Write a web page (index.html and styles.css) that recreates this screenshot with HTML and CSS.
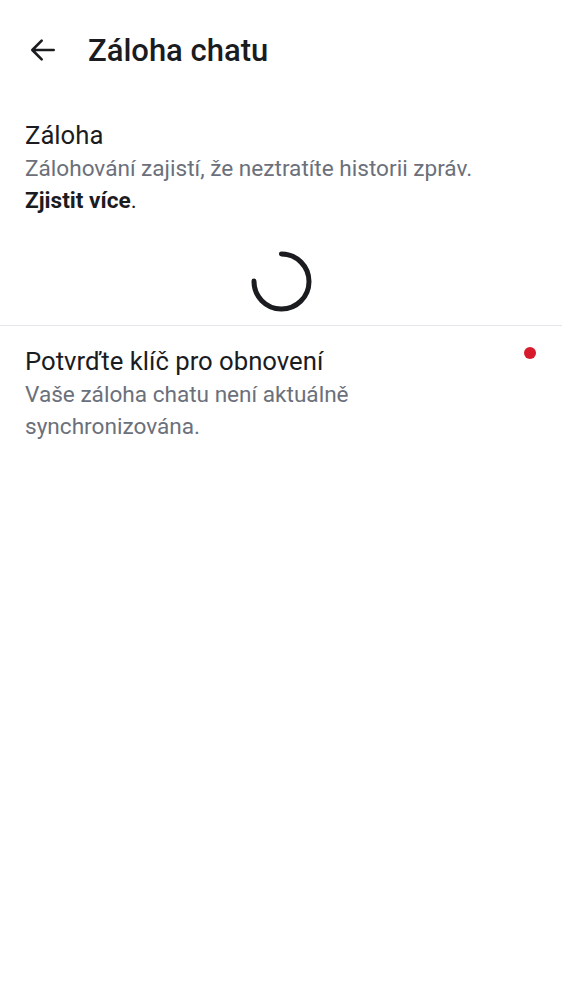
FILE: index.html
```html
<!DOCTYPE html>
<html lang="cs">
<head>
<meta charset="utf-8">
<link rel="stylesheet" href="styles.css">
</head>
<body>
<div class="screen">
  <header class="topbar">
    <button class="back" aria-label="Zpět">
      <svg width="32" height="32" viewBox="0 0 24 24"><path d="M20 12H4.5M11 5l-7 7 7 7" fill="none" stroke="#1b1c1f" stroke-width="2" stroke-linecap="round" stroke-linejoin="round"/></svg>
    </button>
    <h1 class="title">Záloha chatu</h1>
  </header>

  <section class="item">
    <div class="item-title">Záloha</div>
    <div class="item-sub">Zálohování zajistí, že neztratíte historii zpráv.<br><b class="link">Zjistit více</b><span class="dark">.</span></div>
  </section>

  <div class="spinner-wrap">
    <svg class="spinner" width="64" height="64" viewBox="0 0 64 64"><path d="M32 5 A27.5 27.5 0 1 1 4.5 32" transform="translate(0.5,0)" fill="none" stroke="#1b1c1f" stroke-width="5" stroke-linecap="round"/></svg>
  </div>

  <div class="divider"></div>

  <section class="item item2">
    <div class="item-text">
      <div class="item-title">Potvrďte klíč pro obnovení</div>
      <div class="item-sub">Vaše záloha chatu není aktuálně<br>synchronizována.</div>
    </div>
    <span class="dot"></span>
  </section>
</div>
</body>
</html>
```

FILE: styles.css
```css
html, body {
  margin: 0;
  padding: 0;
  background: #ffffff;
}
body {
  font-family: Roboto, "Noto Sans", sans-serif;
  color: #1b1c1f;
}
.screen {
  width: 562px;
}
.topbar {
  display: flex;
  align-items: center;
  height: 100px;
  padding: 0 0 0 27px;
  box-sizing: border-box;
}
.back {
  border: 0;
  background: none;
  padding: 0;
  width: 36px;
  height: 36px;
  display: flex;
  align-items: center;
  justify-content: flex-start;
  cursor: pointer;
}
.title {
  margin: 0 0 0 25px;
  font-size: 31px;
  font-weight: 500;
  letter-spacing: 0;
  color: #1b1c1f;
}
.item {
  padding: 18px 25px 0 25px;
}
.item-title {
  font-size: 25.7px;
  line-height: 35px;
  color: #1b1c1f;
}
.item-sub {
  font-size: 22.6px;
  line-height: 32px;
  color: #6b707b;
}
.link {
  font-weight: 700;
  color: #1b1c1f;
}
.dark {
  color: #1b1c1f;
}
.spinner-wrap {
  display: flex;
  justify-content: center;
  padding: 32px 0 12px;
}
.divider {
  height: 1px;
  background: #e6e7ea;
}
.item2 {
  display: flex;
  justify-content: space-between;
  align-items: flex-start;
  padding-top: 18px;
  padding-right: 26px;
}
.dot {
  width: 12px;
  height: 12px;
  border-radius: 50%;
  background: #d71a2c;
  margin-top: 3px;
}
```
